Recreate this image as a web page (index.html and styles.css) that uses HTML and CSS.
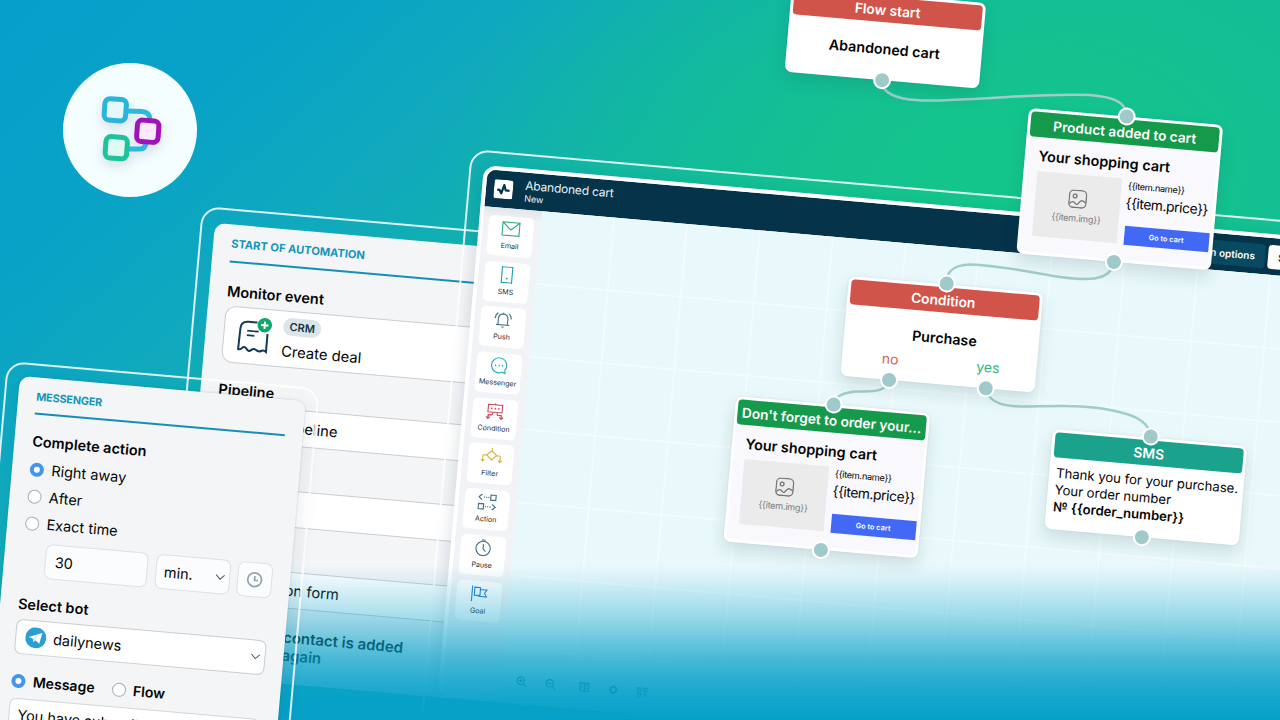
FILE: index.html
```
<!DOCTYPE html>
<html lang="en">
<head>
    <meta charset="UTF-8">
    <title>Automation flow</title>
    <link rel="stylesheet" href="styles.css">
</head>
<body>
    <svg class="defs" width="0" height="0">
        <symbol id="picture" viewBox="0 0 20 20">
            <rect x="1" y="1" width="18" height="18" rx="4.5"/>
            <circle cx="7" cy="7" r="2"/>
            <path d="M1.5 15.5C4 12.500 6 12.500 8 15C9.500 16.500 10.500 15.500 12 13C14 10.500 16 11 18.800 13.500"/>
        </symbol>
        <symbol id="chevron" viewBox="0 0 10 6">
            <path d="M.8.8L5 5L9.200.8"/>
        </symbol>
    </svg>

    <div class="stage">
        <div class="logo">
            <svg viewBox="0 0 134 134">
                <g fill="none" stroke-width="5">
                    <path d="M65 48L79 48.500Q87 49 87 57M66 86H77Q82 86 83 80" stroke="#2db8de"/>
                    <rect x="41.500" y="36" width="21.500" height="21.500" rx="5" transform="rotate(4 52 47)" stroke="#29b5dc" fill="#e6f8ff"/>
                    <rect x="42.500" y="74" width="21.500" height="21.500" rx="5" transform="rotate(4 53.500 85)" stroke="#1fc29b" fill="#dcf9f2"/>
                    <rect x="74" y="57.500" width="21.500" height="21.500" rx="5" transform="rotate(4 84.800 68.500)" stroke="#a013b8" fill="#fbe8ff"/>
                </g>
            </svg>
        </div>

        <!-- Start of automation -->
        <div class="outline outline-start"></div>
        <section class="panel panel-start">
            <h2>START OF AUTOMATION</h2>
            <h3>Monitor event</h3>
            <div class="event">
                <svg class="event-icon" viewBox="0 0 38 38">
                    <path d="M22 5.500H13Q5.500 5.500 5.500 13L5 33.500Q7.500 34 9 32T13 32Q15.500 36 18 33.500T23 33Q25.500 35 28 33.500T33 34V16" fill="none" stroke="#123a52" stroke-width="2"/>
                    <path d="M12.500 14.500H24M12.500 19H20" stroke="#123a52" stroke-width="1.700"/>
                    <circle cx="29.500" cy="7.500" r="7.300" fill="#12a86b"/>
                    <path d="M29.500 3.800V11.200M25.800 7.500H33.200" stroke="#fff" stroke-width="2"/>
                </svg>
                <div>
                    <span class="tag">CRM</span>
                    <p>Create deal</p>
                </div>
            </div>
            <h3 class="pipeline-title">Pipeline</h3>
            <div class="field">Default pipeline</div>
            <div class="field"></div>
            <div class="field">Subscription form</div>
            <p class="note">contact is added<br>again</p>
        </section>

        <!-- Flow editor -->
        <div class="outline outline-editor"></div>
        <section class="editor">
            <header class="topbar">
                <svg class="pulse" viewBox="0 0 20 20">
                    <rect width="20" height="20" rx="2.500" fill="#fff"/>
                    <path d="M3.500 11H6L8 14.500L10.500 5.500L12.500 11H16.500" fill="none" stroke="#04334a" stroke-width="2.400" stroke-linejoin="round"/>
                </svg>
                <div class="flow-name">
                    <strong>Abandoned cart</strong>
                    <span>New</span>
                </div>
                <button class="options">Automation options</button>
                <button class="save">Save</button>
            </header>
            <div class="workspace">
                <nav class="tools">
                    <div class="tool">
                        <svg viewBox="0 0 20 18" stroke="#2fa888"><path d="M1 2H19V16H1ZM1 2L10 10L19 2"/></svg>
                        <span>Email</span>
                    </div>
                    <div class="tool">
                        <svg viewBox="0 0 20 18" stroke="#1c9fae"><path d="M4.500 .6H15.500V17.400H4.500Z"/><path d="M9.200 13H10.800" stroke-width="1.800"/></svg>
                        <span>SMS</span>
                    </div>
                    <div class="tool">
                        <svg viewBox="0 0 20 18" stroke="#4b7488"><path d="M3 14.500H17M5 14.500V8Q5 3 10 3T15 8V14.500M10 3V1.500M8.800 16.800H11.200M1.500 8Q1.500 4 4.500 2M18.500 8Q18.500 4 15.500 2"/></svg>
                        <span>Push</span>
                    </div>
                    <div class="tool">
                        <svg viewBox="0 0 20 18" stroke="#22aebb"><path d="M14 15.700A8 8 0 1 1 16.500 13.500L17 17Z"/><path d="M5.700 9H7M9.400 9H10.700M13 9H14.300" stroke-width="1.700"/></svg>
                        <span>Messenger</span>
                    </div>
                    <div class="tool">
                        <svg viewBox="0 0 20 18" stroke="#d0455a"><path d="M2.500 2H17.500V10H2.500ZM10 .5V2M8 10.500L7 13H3V17M12 10.500L13 13H17V17M1 15L3 17L5 15M15 15L17 17L19 15"/><path d="M5.500 6H7M9.300 6H10.800M13 6H14.500" stroke-width="1.700"/></svg>
                        <span>Condition</span>
                    </div>
                    <div class="tool">
                        <svg class="wide" viewBox="0 0 24 18" stroke="#d8b22f"><path d="M12 0V3M12 3L17.500 8L12 13L6.500 8ZM6.500 8H3.500Q2.500 8 2.500 9.500V15M17.500 8H20.500Q21.500 8 21.500 9.500V15M.5 13L2.500 15L4.500 13M19.500 13L21.500 15L23.500 13"/></svg>
                        <span>Filter</span>
                    </div>
                    <div class="tool">
                        <svg viewBox="0 0 20 18" stroke="#3f6f86"><path d="M4.500 1L1 4L4.500 7M13.500 1.200H19V6.700H13.500ZM1 11.200H6.500V16.700H1ZM15.500 11L19 14L15.500 17"/><path d="M6 4H12M8 14H14" stroke-dasharray="1.200 1.200"/></svg>
                        <span>Action</span>
                    </div>
                    <div class="tool">
                        <svg viewBox="0 0 20 18" stroke="#41708a"><circle cx="10" cy="9.600" r="7.600"/><path d="M8 .6H12M10 5V10L12.700 12.800"/></svg>
                        <span>Pause</span>
                    </div>
                    <div class="tool">
                        <svg viewBox="0 0 20 18" stroke="#2a7fd0" stroke-width="1.300"><path d="M2.500 1V17.500M5 2.500H11V11H5ZM11 4.500H18L15.700 8L18 11.800H9.500V11"/></svg>
                        <span>Goal</span>
                    </div>
                </nav>
                <div class="grid">
                    <div class="zoombar">
                        <svg viewBox="0 0 12 12"><circle cx="5" cy="5" r="4"/><path d="M8 8L11.500 11.500M3 5H7M5 3V7"/></svg>
                        <svg viewBox="0 0 12 12"><circle cx="5" cy="5" r="4"/><path d="M8 8L11.500 11.500M3 5H7"/></svg>
                        <svg class="book" viewBox="0 0 12 12"><path d="M1 1.500H5L6 2.500L7 1.500H11V10H7L6 11L5 10H1ZM6 2.500V11M2.500 4.500H4.500M2.500 7H4.500M7.500 4.500H9.500M7.500 7H9.500"/></svg>
                        <svg viewBox="0 0 12 12"><circle cx="6" cy="6" r="3.300" stroke-width="1.800"/><path d="M6 1V2.500M6 9.500V11M1 6H2.500M9.500 6H11"/></svg>
                        <svg viewBox="0 0 12 12"><path d="M1 1.500H4.500V5H1ZM7.500 1.500H11V5H7.500ZM1 7.500H4.500V11H1ZM7 7.500H11M9 7.500V11"/></svg>
                    </div>
                </div>
            </div>
        </section>

        <!-- Flow nodes and their links -->
        <svg class="links" viewBox="0 0 1280 720">
            <path d="M881.500 82C884 100 915 102 950 100C1010 97.500 1050 93 1090 95C1112 97 1125 101 1126.500 114"/>
            <path d="M1113 266C1108 280 1090 281 1060 277C1030 272 1000 265.500 970 264.500C955 265 947 270 946 282"/>
            <path d="M888 382C885 393 870 391 858 391.500C845 392 837 395 834.500 402"/>
            <path d="M986 390C990 404 1005 407 1030 406.500C1060 406 1085 405 1110 410C1132 414 1147 420 1150.500 434"/>
        </svg>

        <article class="node node-start">
            <h4>Flow start</h4>
            <p class="node-title">Abandoned cart</p>
            <i class="dot dot-out"></i>
        </article>

        <article class="node node-email node-product">
            <h4>Product added to cart</h4>
            <h5>Your shopping cart</h5>
            <div class="item">
                <div class="item-img">
                    <svg><use href="#picture"/></svg>
                    <span>{{item.img}}</span>
                </div>
                <div class="item-info">
                    <small>{{item.name}}</small>
                    <span>{{item.price}}</span>
                    <button>Go to cart</button>
                </div>
            </div>
            <i class="dot dot-in"></i>
            <i class="dot dot-out"></i>
        </article>

        <article class="node node-condition">
            <h4>Condition</h4>
            <p class="node-title">Purchase</p>
            <div class="answers">
                <span class="no">no</span>
                <span class="yes">yes</span>
            </div>
            <i class="dot dot-in"></i>
            <i class="dot dot-no"></i>
            <i class="dot dot-yes"></i>
        </article>

        <article class="node node-email node-reminder">
            <h4>Don't forget to order your...</h4>
            <h5>Your shopping cart</h5>
            <div class="item">
                <div class="item-img">
                    <svg><use href="#picture"/></svg>
                    <span>{{item.img}}</span>
                </div>
                <div class="item-info">
                    <small>{{item.name}}</small>
                    <span>{{item.price}}</span>
                    <button>Go to cart</button>
                </div>
            </div>
            <i class="dot dot-in"></i>
            <i class="dot dot-out"></i>
        </article>

        <article class="node node-sms">
            <h4>SMS</h4>
            <p class="sms-text">Thank you for your purchase.<br>Your order number<br><b>№ {{order_number}}</b></p>
            <i class="dot dot-in"></i>
            <i class="dot dot-out"></i>
        </article>

        <div class="fade"></div>

        <!-- Messenger -->
        <div class="outline outline-messenger"></div>
        <section class="panel panel-messenger">
            <h2>MESSENGER</h2>
            <h3>Complete action</h3>
            <div class="radio on"><i></i><span>Right away</span></div>
            <div class="radio"><i></i><span>After</span></div>
            <div class="radio"><i></i><span>Exact time</span></div>
            <div class="delay">
                <div class="box count">30</div>
                <div class="box unit"><span>min.</span><svg class="chevron"><use href="#chevron"/></svg></div>
                <div class="box clock">
                    <svg viewBox="0 0 16 16"><circle cx="8" cy="8" r="6.500"/><path d="M8 4.500V8.500H11"/></svg>
                </div>
            </div>
            <h3 class="bot-title">Select bot</h3>
            <div class="bot">
                <svg class="telegram" viewBox="0 0 22 22">
                    <circle cx="11" cy="11" r="11" fill="#2b9fd3"/>
                    <path d="M3.500 10.800L17.500 5.200L15.200 16.800L10.800 13.600L8.700 15.800L8.300 12.200Z" fill="#fff"/>
                    <path d="M8.300 12.200L14.500 7.700L9.500 13L8.700 15.800Z" fill="#c5e3f2"/>
                </svg>
                <span>dailynews</span>
                <svg class="chevron"><use href="#chevron"/></svg>
            </div>
            <div class="kind">
                <div class="radio on"><i></i><span>Message</span></div>
                <div class="radio"><i></i><span>Flow</span></div>
            </div>
            <div class="message">You have subscribed</div>
        </section>
    </div>
</body>
</html>
```
FILE: styles.css
```
* {
    box-sizing: border-box;
}
body {
    margin: 0;
    font-family: Inter, "Liberation Sans", sans-serif;
    color: #050506;
}
h2, h3, h4, h5, p {
    margin: 0;
}
button {
    font-family: inherit;
    border: none;
    padding: 0;
}
.defs {
    display: block;
}
.stage {
    position: relative;
    width: 1280px;
    height: 720px;
    overflow: hidden;
    background:
        radial-gradient(ellipse 560px 330px at 1000px 170px, #14c58a 0%, rgba(20,197,138,0.7) 35%, rgba(20,197,138,0) 100%),
        linear-gradient(138deg, #069fcb 0%, #08a2c8 14%, #10a9bd 27%, #11b0af 36%, #12b99b 54%, #12b99b 100%);
}
.logo {
    position: absolute;
    left: 63px;
    top: 63px;
    width: 134px;
    height: 134px;
    border-radius: 50%;
    background: #f4feff;
}
.logo svg {
    display: block;
    filter: drop-shadow(0 5px 6px rgba(60,40,110,0.15));
}

/* tilted windows */
.outline,
.panel,
.editor,
.node {
    position: absolute;
    transform: rotate(5deg);
    transform-origin: 0 0;
}
.outline {
    border: 2px solid rgba(255,255,255,0.85);
    border-radius: 18px;
}
.outline-start {
    left: 202px;
    top: 206px;
    width: 600px;
    height: 700px;
}
.outline-editor {
    left: 471px;
    top: 148.5px;
    width: 1000px;
    height: 700px;
}
.outline-messenger {
    left: 7px;
    top: 361px;
    width: 314px;
    height: 500px;
}

.panel {
    background: #f3f5f7;
    border-radius: 10px;
    padding: 0 18px;
    font-size: 14.5px;
}
.panel h2 {
    height: 37px;
    line-height: 38px;
    border-bottom: 2px solid #1490b4;
    font-size: 11.2px;
    font-weight: 700;
    letter-spacing: -0.05px;
    color: #1695ba;
}
.panel h3 {
    font-size: 14.5px;
    font-weight: 600;
    line-height: 20px;
}

.panel-start {
    left: 215px;
    top: 222.5px;
    width: 500px;
    height: 453px;
}
.panel-start h2 {
    height: 38px;
}
.panel-start h3 {
    margin-top: 19px;
}
.event {
    display: flex;
    height: 57px;
    margin-top: 4px;
    padding: 6px 10px;
    border: 1px solid #c9ced2;
    border-radius: 11px;
    background: #fff;
}
.event-icon {
    width: 38px;
    height: 38px;
    margin: 2px 10px 0 0;
}
.tag {
    display: block;
    width: 38px;
    height: 18px;
    border-radius: 9px;
    background: #dbe5e9;
    color: #0f3348;
    font-size: 11px;
    font-weight: 600;
    line-height: 18px;
    text-align: center;
}
.event p {
    font-size: 14.8px;
    line-height: 20px;
    margin-top: 6px;
}
.panel-start .pipeline-title {
    margin-top: 17px;
}
.field {
    height: 37px;
    margin-top: 4px;
    padding-left: 12px;
    border: 1px solid #c9ced2;
    border-radius: 8px;
    background: #fff;
    font-size: 14.8px;
    line-height: 36px;
}
.field + .field {
    margin-top: 44px;
}
.note {
    padding: 20px 0 0 86px;
    font-size: 15px;
    font-weight: 600;
    line-height: 18px;
}

.editor {
    left: 484px;
    top: 165px;
    width: 900px;
    height: 533px;
    border: 4px solid #fff;
    border-radius: 13px;
    background: #f1f3f6;
    overflow: hidden;
    box-shadow: -3px 4px 14px rgba(20,50,70,0.12);
}
.topbar {
    display: flex;
    align-items: center;
    height: 37px;
    padding-left: 8px;
    background: #04334a;
    color: #e9f1f4;
}
.pulse {
    width: 19px;
    height: 19px;
    margin-right: 12px;
}
.flow-name {
    width: 610px;
}
.flow-name strong,
.flow-name span {
    display: block;
}
.flow-name strong {
    font-size: 12px;
    font-weight: 400;
    letter-spacing: -0.2px;
    line-height: 15px;
}
.flow-name span {
    font-size: 9px;
    line-height: 12px;
}
.topbar button {
    height: 24px;
    border-radius: 4px;
    font-size: 10px;
    font-weight: 600;
}
.options {
    width: 133px;
    margin-right: 3px;
    padding-right: 10px;
    background: #084a62;
    color: #fff;
    text-align: right;
}
.save {
    width: 44px;
    background: #fff;
    color: #04334a;
}
.workspace {
    display: flex;
    height: 488px;
}
.tools {
    display: flex;
    flex-direction: column;
    gap: 5.7px;
    width: 57.5px;
    padding: 8px 0 0 6px;
    background: linear-gradient(#e3e6ea, #f1f3f6 12px);
}
.tool {
    display: flex;
    flex-direction: column;
    align-items: center;
    width: 45px;
    height: 40px;
    padding-top: 4px;
    border-radius: 5px;
    background: #fff;
    font-size: 7.1px;
    line-height: 10px;
    color: #1c2a32;
}
.tool svg {
    width: 19px;
    height: 17px;
    fill: none;
    stroke-width: 1.2;
}
.tool .wide {
    width: 22px;
}
.tool span {
    margin-top: 4px;
}
.grid {
    flex: 1;
    display: flex;
    align-items: flex-end;
    padding: 0 0 12px 15px;
    background:
        linear-gradient(90deg, transparent 71px, rgba(255,255,255,0.35) 71px) 0 0 / 73.2px 73px,
        linear-gradient(transparent 71px, rgba(255,255,255,0.35) 71px) 0 1px / 73.2px 73px,
        #e9f8fa;
}
.zoombar {
    display: flex;
    gap: 18px;
}
.zoombar svg {
    width: 11px;
    height: 11px;
    fill: none;
    stroke: #24505f;
    stroke-width: 1.2;
}
.zoombar .book {
    margin-left: 5px;
}

.links {
    position: absolute;
    left: 0;
    top: 0;
    width: 1280px;
    height: 720px;
    fill: none;
    stroke: #a0cdca;
    stroke-width: 2.5;
}

.node {
    width: 195px;
    height: 100px;
    padding: 3px;
    border-radius: 7px;
    background: #fff;
    box-shadow: 0 8px 16px rgba(20,70,80,0.14), 0 0 2px rgba(20,70,80,0.12);
}
.node h4 {
    height: 25px;
    border-radius: 4px;
    background: #d05449;
    color: #fff;
    font-size: 13.8px;
    font-weight: 600;
    line-height: 26px;
    text-align: center;
    white-space: nowrap;
}
.node-title {
    font-size: 14.3px;
    font-weight: 600;
    line-height: 20px;
    text-align: center;
}
.node-start {
    left: 792px;
    top: -14px;
    height: 86px;
}
.node-start .node-title {
    margin-top: 17px;
}
.node-email {
    height: 145.5px;
    border: 3px solid #fff;
    padding: 0;
    background: #f8f8fd;
}
.node-email h4 {
    background: #159a4b;
    font-size: 13.7px;
}
.node-product {
    left: 1029px;
    top: 108px;
}
.node-reminder {
    left: 736px;
    top: 395.5px;
}
.node-email h5 {
    margin: 9px 0 0 10.5px;
    font-size: 14.4px;
    font-weight: 600;
    line-height: 20px;
}
.item {
    display: flex;
    gap: 6.5px;
    margin: 5px 0 0 11px;
}
.item-img {
    display: flex;
    flex-direction: column;
    align-items: center;
    width: 85px;
    height: 65px;
    padding-top: 15px;
    background: #ebebec;
    color: #77777b;
    font-size: 9px;
    letter-spacing: -0.2px;
    line-height: 14px;
}
.item-img svg {
    width: 19px;
    height: 19px;
    margin-bottom: 3px;
    fill: none;
    stroke: #77777b;
    stroke-width: 1.4;
}
.item-info {
    width: 85px;
}
.item-info small,
.item-info span {
    display: block;
    white-space: nowrap;
}
.item-info small {
    font-size: 9.2px;
    letter-spacing: -0.3px;
    line-height: 14px;
}
.item-info span {
    margin-left: -1px;
    font-size: 13.8px;
    letter-spacing: -0.4px;
    line-height: 20px;
}
.item-info button {
    display: block;
    width: 85px;
    height: 19px;
    margin-top: 13px;
    background: #4169f5;
    color: #fff;
    font-size: 7.4px;
    font-weight: 600;
}
.node-condition {
    left: 848.5px;
    top: 276px;
}
.node-condition h4 {
    padding-right: 3px;
}
.node-condition .node-title {
    margin: 16px 0 0 6px;
}
.answers {
    display: flex;
    justify-content: space-between;
    margin-top: 6px;
    padding: 0 34px 0 37px;
    font-size: 14px;
    line-height: 18px;
}
.no {
    color: #d9594c;
}
.yes {
    color: #35b378;
}
.node-sms {
    left: 1053px;
    top: 429px;
}
.node-sms h4 {
    background: #1ba28d;
}
.sms-text {
    margin: 7px 0 0 4px;
    font-size: 13.2px;
    letter-spacing: -0.03px;
    line-height: 17px;
    white-space: nowrap;
}
.sms-text b {
    font-weight: 600;
}
.dot {
    position: absolute;
    left: 88.5px;
    width: 18px;
    height: 18px;
    border: 2.5px solid #fff;
    border-radius: 50%;
    background: #a0cac9;
}
.dot-in {
    top: -10px;
}
.dot-out,
.dot-no,
.dot-yes {
    bottom: -8.5px;
}
.dot-no {
    left: 39.5px;
}
.dot-yes {
    left: 137px;
}
.node-email .dot {
    left: 86px;
}
.node-email .dot-in {
    top: -12.5px;
}
.node-email .dot-out {
    bottom: -12px;
}

.fade {
    position: absolute;
    left: 0;
    right: 0;
    bottom: 0;
    height: 155px;
    background: linear-gradient(rgba(6,160,201,0) 0%, rgba(6,160,201,0.07) 8%, rgba(6,160,201,0.23) 22.5%, rgba(6,160,201,0.38) 35.5%, rgba(6,160,201,0.56) 48.5%, rgba(6,160,201,0.72) 61%, rgba(6,160,201,0.85) 74%, rgba(6,160,201,0.94) 87%, #06a0c9 100%);
}

.panel-messenger {
    left: 20px;
    top: 376px;
    width: 286.5px;
    height: 450px;
    box-shadow: 0 0 2px rgba(20,50,70,0.2), 5px 5px 18px rgba(20,50,70,0.07);
}
.panel-messenger h2 {
    font-size: 10.9px;
    letter-spacing: -0.2px;
}
.panel-messenger h3 {
    margin-top: 17px;
}
.radio {
    display: flex;
    align-items: center;
    height: 27px;
    line-height: 20px;
}
h3 + .radio {
    margin-top: 4.5px;
}
.radio i {
    width: 14px;
    height: 14px;
    margin-right: 7.5px;
    border: 1px solid #a9adb2;
    border-radius: 50%;
    background: #fff;
}
.radio.on i {
    border: 4.5px solid #4495ee;
}
.delay {
    display: flex;
    gap: 7.5px;
    margin: 5.5px -10px 0 23px;
}
.box,
.bot,
.message {
    border: 1px solid #d3d7db;
    border-radius: 7px;
    background: #fff;
}
.box {
    display: flex;
    flex: none;
    align-items: center;
    height: 35px;
    border-color: #dde1e5;
    background: #fafcfd;
}
.count {
    width: 103px;
    padding: 0 9px 1px;
}
.unit {
    width: 75px;
    justify-content: space-between;
    padding: 0 4px 0 8px;
}
.clock {
    width: 35px;
    justify-content: center;
}
.clock svg {
    width: 17px;
    height: 17px;
    fill: none;
    stroke: #93a3ab;
    stroke-width: 1.6;
}
.chevron {
    width: 10px;
    height: 6px;
    fill: none;
    stroke: #555;
    stroke-width: 1;
}
.panel-messenger .bot-title {
    margin-top: 16.5px;
}
.bot {
    display: flex;
    align-items: center;
    height: 35px;
    margin-top: 5px;
    padding: 0 4px 0 9px;
    border-color: #c9ced2;
}
.telegram {
    width: 21px;
    height: 21px;
    margin-right: 7px;
}
.bot .chevron {
    margin-left: auto;
}
.kind {
    display: flex;
    gap: 17px;
    margin-top: 13.5px;
    font-size: 14.1px;
    font-weight: 600;
}
.message {
    height: 80px;
    margin-top: 4px;
    padding: 6px 8px;
    line-height: 20px;
}
```
